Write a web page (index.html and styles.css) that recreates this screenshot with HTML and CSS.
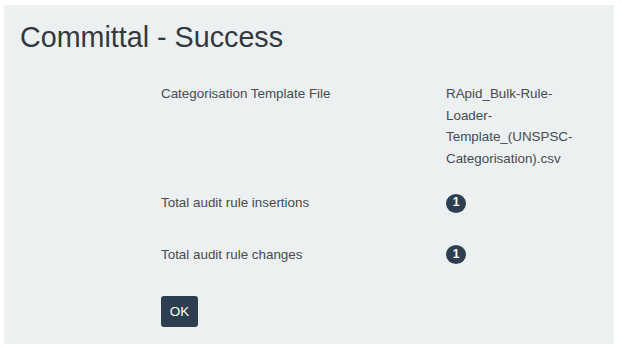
FILE: index.html
```html
<!DOCTYPE html>
<html>

<head>
    <title>Committal - Success</title>
    <link rel="stylesheet" href="styles.css">
</head>

<body>
    <div class="panel">
        <h2>Committal - Success</h2>
        <div class="details">
            <div class="row">
                <div class="label">Categorisation Template File</div>
                <div class="value">RApid_Bulk-Rule-Loader-Template_(UNSPSC-Categorisation).csv</div>
            </div>
            <div class="row count-row">
                <div class="label">Total audit rule insertions</div>
                <div class="value"><span class="badge">1</span></div>
            </div>
            <div class="row count-row">
                <div class="label">Total audit rule changes</div>
                <div class="value"><span class="badge">1</span></div>
            </div>
            <button type="button" class="btn">OK</button>
        </div>
    </div>
</body>

</html>
```

FILE: styles.css
```css
body {
    margin: 0;
    padding: 5px 8px 4px 4px;
    font-family: "Liberation Sans", Arial, sans-serif;
    background-color: #ffffff;
}

.panel {
    height: 339px;
    box-sizing: border-box;
    padding: 16px;
    background-color: #ecf0f1;
}

h2 {
    margin: 0;
    font-size: 28.7px;
    font-weight: normal;
    line-height: 32px;
    color: #33393e;
}

.details {
    margin-left: 141px;
    margin-top: 30px;
}

.row {
    display: grid;
    grid-template-columns: 285px 150px;
    font-size: 13.4px;
    line-height: 21.6px;
    color: #454b50;
    margin-bottom: 23px;
}

.count-row {
    margin-bottom: 30px;
}

.count-row .value {
    display: flex;
    align-items: center;
}

.badge {
    display: inline-flex;
    align-items: center;
    justify-content: center;
    width: 20px;
    height: 19px;
    border-radius: 50%;
    background-color: #2c3e50;
    color: #ffffff;
    font-size: 12px;
    font-weight: bold;
}

.btn {
    display: block;
    margin-top: 4px;
    width: 37px;
    height: 31px;
    padding: 0;
    border: none;
    border-radius: 3px;
    background-color: #2c3e50;
    color: #ffffff;
    font-family: "Liberation Sans", Arial, sans-serif;
    font-size: 13.5px;
    cursor: pointer;
}
```
